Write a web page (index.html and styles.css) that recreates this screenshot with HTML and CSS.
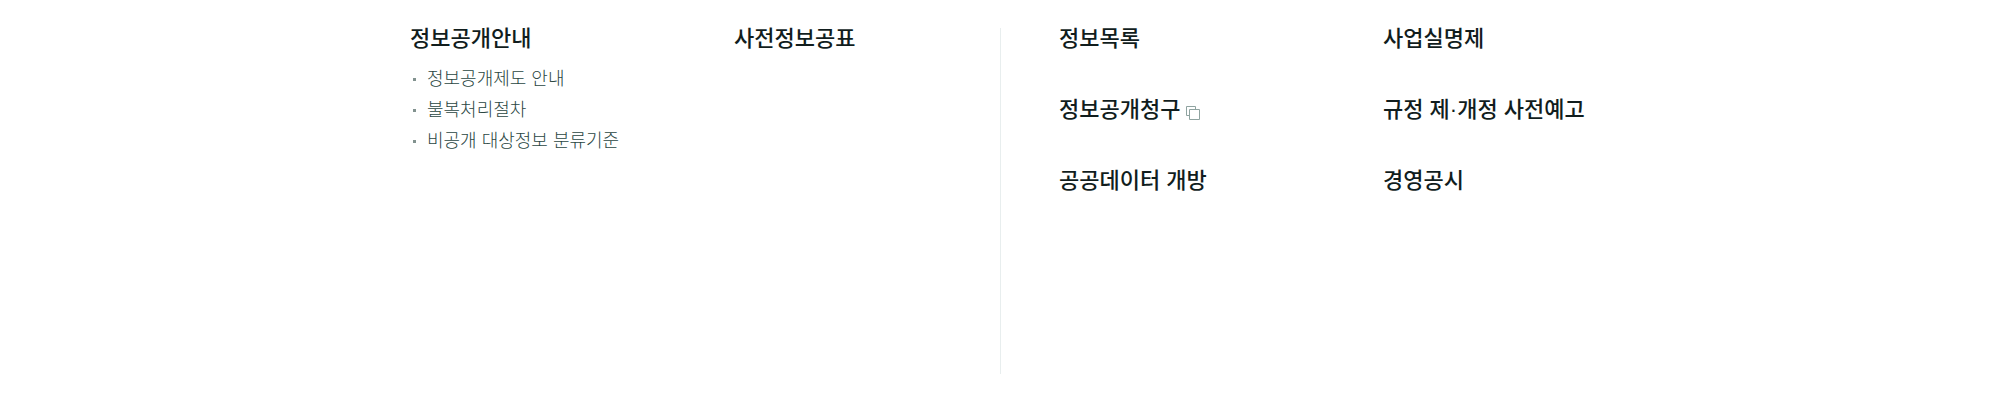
FILE: index.html
```html
<!DOCTYPE html>
<html lang="ko">
<head>
<meta charset="utf-8">
<title>정보공개</title>
<link rel="stylesheet" href="styles.css">
</head>
<body>
<nav class="menu">
  <div class="group">
    <section class="item">
      <a class="title" href="#">정보공개안내</a>
      <ul class="sub">
        <li><a href="#">정보공개제도 안내</a></li>
        <li><a href="#">불복처리절차</a></li>
        <li><a href="#">비공개 대상정보 분류기준</a></li>
      </ul>
    </section>
    <section class="item"><a class="title" href="#">사전정보공표</a></section>
  </div>
  <div class="group group-right">
    <section class="item"><a class="title" href="#">정보목록</a></section>
    <section class="item"><a class="title" href="#">사업실명제</a></section>
    <section class="item"><a class="title" href="#">정보공개청구<svg class="ext" viewBox="0 0 14 14" aria-hidden="true"><path d="M3.500 9.500H.5V.5h9V3M3.500 3.500h10v10h-10z"/></svg></a></section>
    <section class="item"><a class="title" href="#">규정 제·개정 사전예고</a></section>
    <section class="item"><a class="title" href="#">공공데이터 개방</a></section>
    <section class="item"><a class="title" href="#">경영공시</a></section>
  </div>
</nav>
</body>
</html>
```
FILE: styles.css
```css
* { box-sizing: border-box; }
body {
  margin: 0;
  background: #fff;
  font-family: "Liberation Sans", "Noto Sans CJK KR", sans-serif;
}
a { color: inherit; text-decoration: none; }
.menu {
  display: grid;
  grid-template-columns: 1fr 1fr;
  max-width: 1180px;
  min-height: 346px;
  margin: 28px auto 0;
}
.group {
  display: grid;
  grid-template-columns: 324px 1fr;
  align-content: start;
  row-gap: 50px;
}
.group-right {
  padding-left: 58px;
  border-left: 1px solid #e8eeee;
}
.title {
  display: flex;
  align-items: center;
  gap: 6px;
  color: #111d1d;
  font-size: 22px;
  font-weight: 500;
  line-height: 21px;
}
.sub {
  margin: 15px 0 0;
  padding: 0;
  list-style: none;
  color: #2a4642;
  font-size: 18px;
  font-weight: 300;
  line-height: 31px;
}
.sub li { display: flex; align-items: center; gap: 11px; }
.sub li::before {
  content: "";
  width: 3px;
  height: 3px;
  margin-left: 3px;
  background: #82928f;
}
.ext {
  width: 14px;
  height: 14px;
  margin-top: 6px;
  fill: none;
  stroke: #8fa3a0;
}
```
